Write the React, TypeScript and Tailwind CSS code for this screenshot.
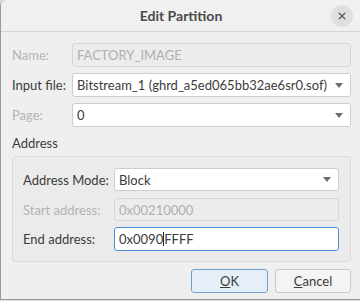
import { X } from "lucide-react";

const font = { fontFamily: 'Lato, "Noto Sans", sans-serif' };

function Arrow() {
  return (
    <svg width="8" height="5" viewBox="0 0 8 5" className="shrink-0">
      <path d="M0 0 L8 0 L4 5 Z" fill="#6e6e6e" />
    </svg>
  );
}

function Field({
  value,
  disabled,
  select,
  focused,
  children,
}: {
  value?: string;
  disabled?: boolean;
  select?: boolean;
  focused?: boolean;
  children?: React.ReactNode;
}) {
  return (
    <div
      className={
        "flex h-full min-w-0 flex-1 items-center rounded-[3px] border pl-[4px] pr-[7px] " +
        (disabled
          ? "border-[#d6d6d6] bg-[#ececec] text-[#b0b0b0]"
          : focused
            ? "border-[#4a90d9] bg-white text-[#3c3c3c]"
            : "border-[#cdcdcd] bg-white text-[#3c3c3c]")
      }
    >
      <span className="flex-1 overflow-hidden whitespace-nowrap leading-[18px]">{children ?? value}</span>
      {select && <Arrow />}
    </div>
  );
}

function Label({ text, w, dim }: { text: string; w: string; dim?: boolean }) {
  return (
    <span className={"shrink-0 whitespace-nowrap leading-[18px] " + w + (dim ? " text-[#b4b4b4]" : " text-[#3c3c3c]")}>
      {text}
    </span>
  );
}

export default function App() {
  return (
    <div
      className="h-[301px] w-[360px] overflow-hidden bg-[#dcdcdc] text-[13px] leading-none"
      style={font}
    >
      <div className="flex h-[300px] w-[361px] flex-col overflow-hidden rounded-tl-[6px] border-l border-b border-[#9a9a9a] bg-[#efefef]">
        <div className="flex h-[32px] shrink-0 items-center border-b border-[#d4d4d4] bg-[#f0f0f0]">
          <div className="flex-1 pl-[30px] text-center text-[14px] font-bold leading-[18px] text-[#4a4a4a]">
            Edit Partition
          </div>
          <div className="mr-[8px] flex h-[22px] w-[22px] items-center justify-center rounded-full bg-[#e0e0e0]">
            <X size={12} strokeWidth={2.2} color="#555" />
          </div>
        </div>

        <div className="flex flex-col pl-[11px] pr-[10px] pt-[11px]">
          <div className="flex h-[24px] items-center">
            <Label text="Name:" w="w-[60px]" dim />
            <Field value="FACTORY_IMAGE" disabled />
          </div>
          <div className="mt-[6px] flex h-[24px] items-center">
            <Label text="Input file:" w="w-[60px]" />
            <Field value="Bitstream_1 (ghrd_a5ed065bb32ae6sr0.sof)" select />
          </div>
          <div className="mt-[6px] flex h-[24px] items-center">
            <Label text="Page:" w="w-[60px]" dim />
            <Field value="0" select />
          </div>
          <div className="mt-[7px] leading-[18px] text-[#3c3c3c]">Address</div>
          <div className="mt-[4px] flex flex-col rounded-[3px] border border-[#dadada] bg-[#ebebeb] pb-[10px] pl-[10px] pr-[11px] pt-[11px]">
            <div className="flex h-[23px] items-center">
              <Label text="Address Mode:" w="w-[91px]" />
              <Field value="Block" select />
            </div>
            <div className="mt-[7px] flex h-[23px] items-center">
              <Label text="Start address:" w="w-[91px]" dim />
              <Field value="0x00210000" disabled />
            </div>
            <div className="mt-[6px] flex h-[24px] items-center">
              <Label text="End address:" w="w-[91px]" />
              <Field focused>
                0x0090
                <span className="inline-block h-[14px] w-px translate-y-[2px] bg-[#222]" />
                FFFF
              </Field>
            </div>
          </div>
          <div className="mt-[7px] flex justify-end gap-[7px]">
            <button className="flex h-[24px] w-[77px] items-center justify-center rounded-[3px] border border-[#6f9fd0] bg-[#e6eef7] leading-[18px] text-[#3c3c3c]">
              <span className="underline">O</span>K
            </button>
            <button className="flex h-[24px] w-[76px] items-center justify-center rounded-[3px] border border-[#c8c8c8] bg-[#f4f4f4] leading-[18px] text-[#3c3c3c]">
              <span className="underline">C</span>ancel
            </button>
          </div>
        </div>
      </div>
    </div>
  );
}
